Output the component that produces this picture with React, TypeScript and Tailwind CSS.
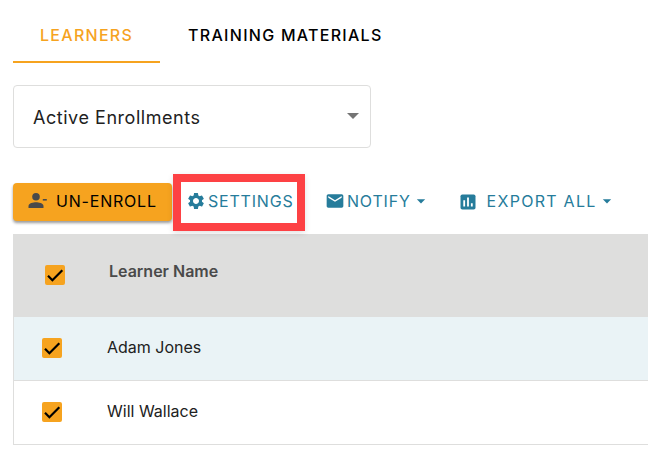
import { MdArrowDropDown, MdEmail, MdSettings } from "react-icons/md";

const learners = [
    { id: 1, name: "Adam Jones", rowClass: "bg-[#eaf3f6]" },
    { id: 2, name: "Will Wallace", rowClass: "bg-white" },
];

const CheckBox = ({ label }: { label: string }) => (
    <label className="relative block size-5">
        <input
            type="checkbox"
            defaultChecked
            aria-label={label}
            className="peer block size-5 appearance-none rounded-xs border-2 border-[#f6a31f] checked:bg-[#f6a31f]"
        />
        <svg
            viewBox="0 0 20 20"
            className="pointer-events-none absolute inset-0 hidden size-5 peer-checked:block"
            fill="none"
            stroke="#000"
            strokeWidth="2.2"
        >
            <path d="M3 10.8 7.4 15.2 17.3 5.2" />
        </svg>
    </label>
);

const UnenrollIcon = () => (
    <svg viewBox="0 0 20 16" className="h-4 w-5" fill="#4a4a4a">
        <circle cx="8" cy="3.8" r="3.8" />
        <path d="M.5 15v-2c0-2.7 5-3.7 7.5-3.7s7.5 1 7.5 3.7v2z" />
        <path d="M14.8 6h4v1.6h-4z" />
    </svg>
);

const ChartIcon = () => (
    <svg viewBox="0 0 16 16" className="size-4">
        <rect x=".5" y=".5" width="15" height="15" rx="1.8" fill="#267c9b" />
        <path
            d="M3.3 6.3h1.8v6.2H3.3zM7.1 3.6h1.8v8.9H7.1zM10.9 9.2h1.8v3.3h-1.8z"
            fill="#fff"
        />
    </svg>
);

const App = () => {
    return (
        <main className="bg-white pb-4 pl-[13px] font-['Inter',sans-serif] text-base text-[#212121]">
            {/* Tabs */}
            <nav className="flex font-medium tracking-[0.08em]">
                <button className="border-b-2 border-[#f6a31f] px-[27px] pt-[23px] pb-3.5 text-[#f6a31f]">
                    LEARNERS
                </button>
                <button className="border-b-2 border-transparent px-7 pt-[23px] pb-3.5 text-black">
                    TRAINING MATERIALS
                </button>
            </nav>

            {/* Enrollment filter */}
            <div className="relative mt-[22px] w-full max-w-[358px]">
                <select
                    aria-label="Enrollment filter"
                    className="block h-[63px] w-full appearance-none rounded border border-[#dededd] bg-white pt-0.5 pr-10 pl-[19px] text-lg tracking-[0.03em]"
                >
                    <option>Active Enrollments</option>
                    <option>Past Enrollments</option>
                </select>
                <svg
                    viewBox="0 0 12 6"
                    className="pointer-events-none absolute top-7 right-3 h-1.5 w-3"
                    fill="#757575"
                >
                    <path d="M0 0h12L6 6z" />
                </svg>
            </div>

            {/* Toolbar */}
            <div className="mt-[35px] flex h-[51px] items-start text-[#267c9b]">
                <button className="flex h-[38px] w-[159px] items-center gap-2 rounded bg-[#f6a31f] pb-0.5 pl-[15px] tracking-wider text-black shadow-[0_2px_3px_rgba(0,0,0,0.4)]">
                    <UnenrollIcon />
                    UN-ENROLL
                </button>
                <div className="relative ml-[14px]">
                    <button className="flex h-[38px] w-[107px] items-center gap-0.5 pb-0.5 tracking-wider">
                        <MdSettings className="size-5 shrink-0" />
                        SETTINGS
                    </button>
                    <div className="pointer-events-none absolute -top-[9px] -right-[12px] -bottom-[10px] -left-[13px] border-8 border-[#fd4144] shadow-[0_2px_6px_rgba(0,0,0,0.12)]" />
                </div>
                <button className="ml-[32px] flex h-[38px] items-center gap-0.5 pb-0.5 tracking-wider">
                    <MdEmail className="size-5" />
                    NOTIFY
                    <MdArrowDropDown className="-ml-0.5 size-5" />
                </button>
                <button className="ml-[29px] flex h-[38px] items-center pb-0.5 tracking-[0.08em]">
                    <span className="mr-[11px] pt-0.5">
                        <ChartIcon />
                    </span>
                    EXPORT ALL
                    <MdArrowDropDown className="size-5" />
                </button>
            </div>

            {/* Learners */}
            <table className="w-full border-separate border-spacing-0 border-l border-[#dededd] text-left">
                <thead>
                    <tr className="h-[83px] bg-[#dededd]">
                        <th className="w-[93px] pb-0.5 pl-[31px]">
                            <CheckBox label="Select all learners" />
                        </th>
                        <th className="pb-2.5 pl-0.5 font-semibold text-[#4a4a4a]">
                            Learner Name
                        </th>
                    </tr>
                </thead>
                <tbody>
                    {learners.map((learner) => (
                        <tr key={learner.id} className={`h-16 ${learner.rowClass}`}>
                            <td className="border-b border-[#dededd] pb-0.5 pl-7">
                                <CheckBox label={`Select ${learner.name}`} />
                            </td>
                            <td className="border-b border-[#dededd] pb-1">{learner.name}</td>
                        </tr>
                    ))}
                </tbody>
            </table>
        </main>
    );
};

export default App;
